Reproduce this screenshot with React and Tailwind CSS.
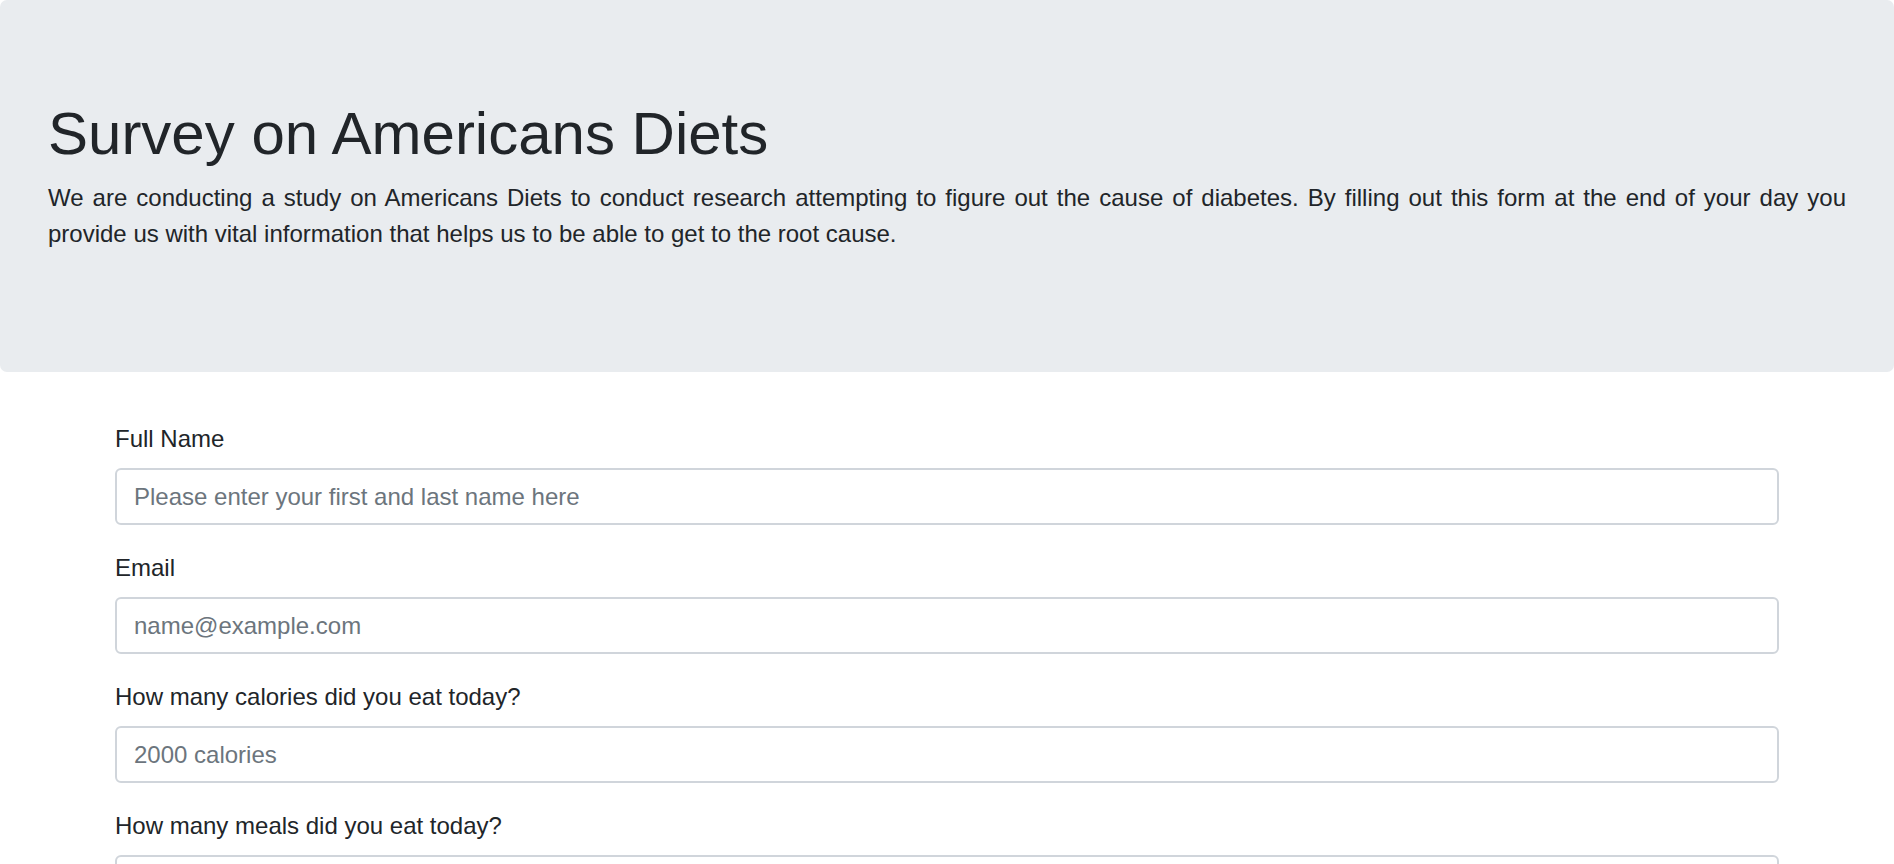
import { useState } from "react";

const fields = [
  { id: "fullName", label: "Full Name", type: "text", placeholder: "Please enter your first and last name here" },
  { id: "email", label: "Email", type: "email", placeholder: "name@example.com" },
  { id: "calories", label: "How many calories did you eat today?", type: "number", placeholder: "2000 calories" },
  { id: "meals", label: "How many meals did you eat today?", type: "number", placeholder: "3 meals" },
];

function App() {
  const [values, setValues] = useState({});

  return (
    <div className="h-screen overflow-hidden bg-white font-['Liberation_Sans',Arial,sans-serif] text-[#212529]">

      {/* Jumbotron */}
      <header className="mb-[48px] rounded-[7px] bg-[#e9ecef] px-[48px] py-[96px]">
        <h1 className="mb-[8px] text-[60px] leading-[76px] font-medium">
          Survey on Americans Diets
        </h1>
        <p className="mb-[24px] text-justify text-[24px] leading-[36px]">
          We are conducting a study on Americans Diets to conduct research attempting to figure out the cause of diabetes. By filling out this form at the end of your day you provide us with vital information that helps us to be able to get to the root cause.
        </p>
      </header>

      {/* Form */}
      <form className="mx-auto w-[1710px] px-[23px]">
        {fields.map((f) => (
          <div key={f.id} className="mb-[24px]">
            <label htmlFor={f.id} className="mb-[12px] block pt-[1px] text-[24px] leading-[35px]">
              {f.label}
            </label>
            <input
              id={f.id}
              type={f.type}
              placeholder={f.placeholder}
              value={values[f.id] || ""}
              onChange={(e) => setValues({ ...values, [f.id]: e.target.value })}
              className="block h-[57px] w-full rounded-[6px] border-2 border-[#d0d5db] bg-white px-[17px] text-[24px] leading-[36px] text-[#495057] outline-none placeholder:text-[#6c757d]"
            />
          </div>
        ))}
      </form>

    </div>
  );
}

export default App;
